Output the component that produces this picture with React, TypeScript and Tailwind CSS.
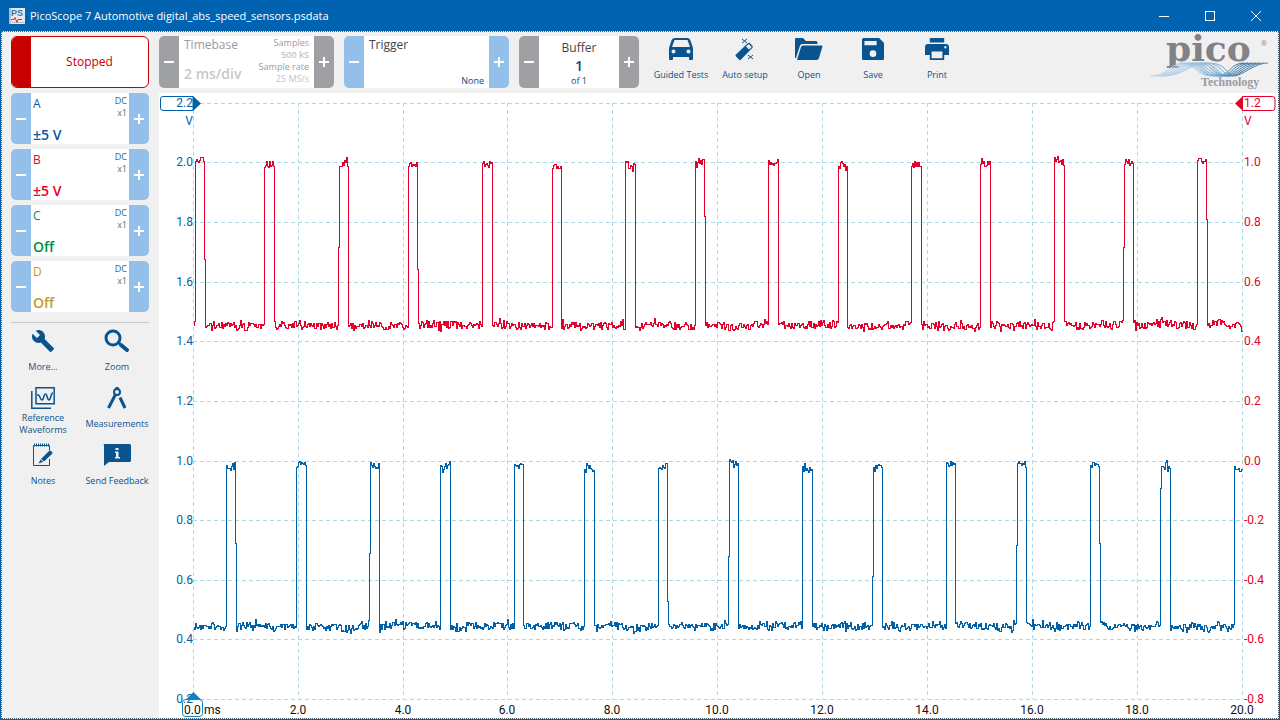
import type { ReactNode } from 'react';

interface Pulse {
  rise: number;
  fall: number;
  top: number;
  riseStep?: number;
  fallStep?: number;
}

const CHANNEL_B: Pulse[] = [
  { rise: 195, fall: 204, top: 159, fallStep: 259 },
  { rise: 264, fall: 274, top: 163 },
  { rise: 339, fall: 348, top: 164, riseStep: 247 },
  { rise: 408, fall: 417, top: 163, fallStep: 269 },
  { rise: 482, fall: 492, top: 163 },
  { rise: 552, fall: 561, top: 165 },
  { rise: 625, fall: 635, top: 163 },
  { rise: 695, fall: 704, top: 163, fallStep: 216 },
  { rise: 768, fall: 778, top: 162 },
  { rise: 838, fall: 847, top: 166 },
  { rise: 911, fall: 921, top: 165 },
  { rise: 980, fall: 990, top: 164 },
  { rise: 1054, fall: 1064, top: 162 },
  { rise: 1124, fall: 1133, top: 163, riseStep: 247 },
  { rise: 1197, fall: 1206, top: 161, fallStep: 219 },
];

const CHANNEL_A: Pulse[] = [
  { rise: 226, fall: 235, top: 466, fallStep: 543 },
  { rise: 296, fall: 306, top: 463 },
  { rise: 370, fall: 379, top: 465, riseStep: 553 },
  { rise: 440, fall: 450, top: 467 },
  { rise: 514, fall: 523, top: 465 },
  { rise: 584, fall: 594, top: 466 },
  { rise: 658, fall: 667, top: 465, fallStep: 601 },
  { rise: 729, fall: 738, top: 464, riseStep: 556 },
  { rise: 802, fall: 812, top: 468 },
  { rise: 873, fall: 882, top: 467, riseStep: 576 },
  { rise: 946, fall: 955, top: 465 },
  { rise: 1017, fall: 1026, top: 465, riseStep: 545 },
  { rise: 1090, fall: 1099, top: 464, fallStep: 543 },
  { rise: 1161, fall: 1170, top: 465, riseStep: 488 },
  { rise: 1234, fall: 1250, top: 466 },
];

const H_LINES = [103, 162, 222, 282, 341, 401, 461, 520, 580, 639, 699];
const V_LINES = [193, 298, 403, 507, 612, 717, 822, 927, 1032, 1137, 1242];
const LEFT_LABELS = ['2.0', '1.8', '1.6', '1.4', '1.2', '1.0', '0.8', '0.6', '0.4', '0.2'];
const RIGHT_LABELS = ['1.0', '0.8', '0.6', '0.4', '0.2', '0.0', '-0.2', '-0.4', '-0.6', '-0.8'];
const TIME_LABELS = ['2.0', '4.0', '6.0', '8.0', '10.0', '12.0', '14.0', '16.0', '18.0', '20.0'];

// One noisy sample per column, drawn as steps
function buildTrace(pulses: Pulse[], base: number, seed: number): string {
  let state = seed;
  const rand = () => {
    state = (state * 1664525 + 1013904223) % 4294967296;
    return state / 4294967296;
  };
  let drift = 0;
  let d = '';
  for (let x = 193; x <= 1241; x++) {
    drift = drift * 0.85 + (rand() - 0.5) * 2;
    const spread = rand() > 0.85 ? 12 : 7;
    const noise = drift + (rand() - 0.5) * spread;
    const pulse = pulses.find((p) => x >= p.rise && x < p.fall);
    const step = pulses.find((p) => p.riseStep && x === p.rise - 1)?.riseStep
      ?? pulses.find((p) => p.fallStep && x === p.fall)?.fallStep;
    const y = step ?? Math.round((pulse ? pulse.top : base) + noise);
    d += d ? `V${y + 0.5}` : `M${x + 0.5} ${y + 0.5}`;
    d += `H${x + 1.5}`;
  }
  return d;
}

const TRACE_B = buildTrace(CHANNEL_B, 325, 42);
const TRACE_A = buildTrace(CHANNEL_A, 626, 7);

interface StepperProps {
  name: string;
  tone: 'blue' | 'gray';
  className: string;
  children: ReactNode;
}

function Stepper({ name, tone, className, children }: StepperProps) {
  const side = tone === 'blue' ? 'bg-[#94bfea]' : 'bg-[#9fa0a4]';
  return (
    <div className={`flex overflow-hidden rounded-[5px] bg-white ${className}`}>
      <button aria-label={`Decrease ${name}`} className={`flex w-5 shrink-0 items-center justify-center ${side}`}>
        <span className="h-[2px] w-[10px] bg-white" />
      </button>
      <div className="min-w-0 flex-1">{children}</div>
      <button aria-label={`Increase ${name}`} className={`flex w-5 shrink-0 items-center justify-center ${side}`}>
        <svg width="10" height="10" viewBox="0 0 10 10" fill="#fff">
          <path d="M4 0h2v4h4v2H6v4H4V6H0V4h4z" />
        </svg>
      </button>
    </div>
  );
}

interface ChannelProps {
  name: string;
  range: string;
  color: string;
}

function Channel({ name, range, color }: ChannelProps) {
  return (
    <Stepper name={`channel ${name}`} tone="blue" className="mx-[5px] h-[51px]">
      <div className="flex h-full justify-between">
        <div className={`flex flex-col justify-between pt-[3px] pl-[2px] ${color}`}>
          <span className="text-[12px] leading-4">{name}</span>
          <span className="text-[14px] leading-[18px] font-semibold whitespace-nowrap">{range}</span>
        </div>
        <div className="flex flex-col pt-[2px] pr-[2px] text-right text-[9px] leading-3 text-[#2d5f92]">
          <span>DC</span>
          <span className="text-[#5d6f85]">x1</span>
        </div>
      </div>
    </Stepper>
  );
}

function ToolButton({ label, className, children }: { label: string; className: string; children: ReactNode }) {
  return (
    <button className={`flex flex-col items-center pt-px text-[#09548f] ${className}`}>
      <span className="flex h-6 items-center">{children}</span>
      <span className="flex h-[27px] items-center justify-center text-center text-[9px] leading-3">{label}</span>
    </button>
  );
}

const CarIcon = () => (
  <svg width="24" height="22" viewBox="0 0 24 22" fill="currentColor">
    <path
      fillRule="evenodd"
      d="M6 0h12c2 0 3 1 3.500 2.500L24 10v11q0 1-1 1h-2q-1 0-1-1v-2H4v2q0 1-1 1H1q-1 0-1-1V10L2.500 2.500C3 1 4 0 6 0zM5.500 2 3 9h18l-2.500-7zM4.500 11.500a2 2 0 1 0 0 4 2 2 0 0 0 0-4zm15 0a2 2 0 1 0 0 4 2 2 0 0 0 0-4z"
    />
  </svg>
);

const WandIcon = () => (
  <svg width="20" height="22" viewBox="0 0 20 22" fill="currentColor">
    <path fillRule="evenodd" d="M1 16.500 13 5l1.500-.3 3.300 3.500-.3 1.500L6 21.500q-1 1-2 0L1 18.500q-1-1 0-2zM13.500 6 11 8.500l3 3L16.800 9z" />
    <path d="M7 1l5 4M12 1 7 5M13 17l5 4M18 17l-5 4" stroke="currentColor" strokeWidth="1" />
  </svg>
);

const OpenIcon = () => (
  <svg width="28" height="22" viewBox="0 0 28 22" fill="currentColor">
    <path d="M0 1q0-1 1-1h7l3 3h10q1.500 0 1.500 1.500V6H7.500Q5.500 6 5 7.500L1 20H0z" />
    <path d="M8 7.500h18.500q1.300 0 .9 1.300L24 20q-.5 2-2.500 2H2L6 9q.5-1.500 2-1.500z" />
  </svg>
);

const SaveIcon = () => (
  <svg width="22" height="22" viewBox="3 3 18 18" fill="currentColor">
    <path d="M17 3H4.500C3.500 3 3 3.500 3 4.500v15c0 1 .5 1.500 1.500 1.500h15c1 0 1.500-.5 1.500-1.500V7l-4-4zm-5 15.500a2.700 2.700 0 1 1 0-5.400 2.700 2.700 0 0 1 0 5.400zM15 9H5V5.500h10V9z" />
  </svg>
);

const PrintIcon = () => (
  <svg width="24" height="22" viewBox="2 3 20 18" preserveAspectRatio="none" fill="currentColor">
    <path d="M19.500 8h-15C3 8 2 9 2 10.500V17h4v4h12v-4h4v-6.500C22 9 21 8 19.500 8zM16.500 19.500h-9V14h9v5.500zm2.500-8a1 1 0 1 1 0-2 1 1 0 0 1 0 2zM18 3H6v3.700h12V3z" />
  </svg>
);

const WrenchIcon = () => (
  <svg width="24" height="24" viewBox="0 0 24 24" fill="currentColor">
    <path d="m22.700 19-9.100-9.100c.9-2.300.4-5-1.500-6.900-2-2-5-2.400-7.400-1.300L9 6 6 9 1.600 4.700C.4 7.100.9 10.100 2.900 12.100c1.900 1.900 4.600 2.400 6.900 1.500l9.100 9.100c.4.400 1 .4 1.400 0l2.300-2.300c.5-.4.5-1.100.1-1.400z" />
  </svg>
);

const ZoomIcon = () => (
  <svg width="26" height="24" viewBox="0 0 26 24" fill="none" stroke="currentColor">
    <circle cx="9" cy="9" r="7" strokeWidth="3" />
    <path d="m14 13 2 2" strokeWidth="3" />
    <path d="m17 16 6 5" strokeWidth="4" strokeLinecap="round" />
  </svg>
);

const WaveformIcon = () => (
  <svg width="24" height="22" viewBox="0 0 24 22" fill="none" stroke="currentColor">
    <path d="M.8 4v17.200H20" strokeWidth="1.500" />
    <path d="M5 .8h18.200v16H5z" strokeWidth="1.500" />
    <path d="M6 8h1.500c1.500 0 1.500 5 3.500 5s1.500-6 3.500-6 1.500 6 3.500 6 1.500-7 4-7" strokeWidth="1.500" />
  </svg>
);

const CompassIcon = () => (
  <svg width="20" height="24" viewBox="0 0 20 24" fill="none" stroke="currentColor">
    <path d="M10 1v3" strokeWidth="3" />
    <circle cx="10" cy="6" r="3" strokeWidth="2" />
    <path d="m8.500 8.500-7 13.500M13 11.500 18 22" strokeWidth="3" />
  </svg>
);

const NotesIcon = () => (
  <svg width="22" height="24" viewBox="0 0 22 24" fill="none" stroke="currentColor">
    <path d="M1.500 2.500h16v5M17.500 16v6.500h-16v-20" strokeWidth="1" />
    <path d="M2 2h16" strokeWidth="3" strokeDasharray="1 1" />
    <path d="m9 16 8-8q1-1 2 0l1 1q1 1 0 2l-8 7.500-5.500 2z" fill="currentColor" stroke="none" />
    <path d="m8.500 16 3.500 3" stroke="#f0f0f0" strokeWidth="1" />
  </svg>
);

const FeedbackIcon = () => (
  <svg width="28" height="22" viewBox="0 0 28 22">
    <path d="M1.500 0h25q1.500 0 1.500 1.500v15q0 1.500-1.500 1.500H6l-5 4V2Q0 0 1.500 0z" fill="currentColor" />
    <path d="M12.500 4h3v2h-3zM12 7.500h3.500V13H17v1.500h-5V13h1V9h-1z" fill="#f0f0f0" />
  </svg>
);

function PicoLogo() {
  const strands = [0, 1, 2, 3, 4, 5, 6];
  return (
    <svg width="120" height="52" viewBox="0 0 120 52" className="overflow-visible" role="img" aria-label="Pico Technology">
      <defs>
        <linearGradient id="strand" gradientUnits="userSpaceOnUse" x1="0" y1="0" x2="120" y2="0">
          <stop offset="0" stopColor="#c3dcf0" />
          <stop offset="0.5" stopColor="#8fb9dc" />
          <stop offset="0.75" stopColor="#35729c" />
          <stop offset="1" stopColor="#5a93ba" />
        </linearGradient>
      </defs>
      <text x="16" y="25" fontFamily="DejaVu Serif, serif" fontSize="36" fontWeight="bold" fill="#808287">
        pico
      </text>
      <text x="111" y="10" fontFamily="Liberation Sans, sans-serif" fontSize="8" fill="#808287">®</text>
      <g fill="none" stroke="url(#strand)" strokeWidth="1">
        {strands.map((i) => (
          <path
            key={i}
            d={`M${i * 2} 40C${18 + i * 3} 40 ${20 + i * 3} 27 ${34 + i * 4} 27S${52 + i * 4} 40 ${66 + i * 3} 40S${80 + i * 4} 27 ${94 + i * 4} 27`}
          />
        ))}
        {strands.map((i) => (
          <path key={`b${i}`} d={`M${30 + i * 4} 27C${46 + i * 3} 27 ${46 + i * 3} 40 ${62 + i * 3} 40`} />
        ))}
      </g>
      <text x="51" y="50" fontFamily="Liberation Serif, serif" fontSize="12" fontWeight="bold" fill="#999ba0">
        Technology
      </text>
    </svg>
  );
}

function Scope() {
  return (
    <svg
      viewBox="159 93 1119 625"
      className="block w-full bg-white"
      fontFamily="Roboto, sans-serif"
      fontSize="12"
      role="img"
      aria-label="Channel A and channel B against time"
    >
      <g stroke="#add8e6" strokeDasharray="4 3" shapeRendering="crispEdges">
        {H_LINES.map((y) => (
          <line key={y} x1="193" x2="1242" y1={y + 0.5} y2={y + 0.5} />
        ))}
        {V_LINES.map((x) => (
          <line key={x} x1={x + 0.5} x2={x + 0.5} y1="103" y2="699" />
        ))}
      </g>

      <path d={TRACE_B} fill="none" stroke="#e4002b" shapeRendering="crispEdges" />
      <path d={TRACE_A} fill="none" stroke="#0060a8" shapeRendering="crispEdges" />

      {/* Voltage axes */}
      <g fill="#0060a8" textAnchor="end">
        <path d="M163 96.500h30v14h-30q-2.500 0-2.500-2.500v-9q0-2.500 2.500-2.500z" fill="#fff" stroke="#0060a8" />
        <path d="M193 96v15l8-7.500z" />
        <text x="193" y="107">2.2</text>
        <text x="193" y="125">V</text>
        {LEFT_LABELS.map((label, i) => (
          <text key={label} x="193" y={H_LINES[i + 1] + 4}>{label}</text>
        ))}
      </g>
      <g fill="#e4002b">
        <path d="M1242.500 96.500h30q2.500 0 2.500 2.500v9q0 2.500-2.500 2.500h-30z" fill="#fff" stroke="#e4002b" />
        <path d="M1243 96v15l-8-7.500z" />
        <text x="1244" y="107">1.2</text>
        <text x="1244" y="125">V</text>
        {RIGHT_LABELS.map((label, i) => (
          <text key={label} x="1244" y={H_LINES[i + 1] + 4}>{label}</text>
        ))}
      </g>

      {/* Time axis */}
      <rect x="182.500" y="699.500" width="20" height="17" rx="3" fill="none" stroke="#0a85ca" />
      <path d="M193.500 692l8 8h-16z" fill="#0a85ca" />
      <g fill="#111">
        <text x="184" y="714">0.0</text>
        <text x="204" y="714">ms</text>
        {TIME_LABELS.map((label, i) => (
          <text key={label} x={V_LINES[i + 1]} y="714" textAnchor="middle">{label}</text>
        ))}
      </g>
    </svg>
  );
}

export default function App() {
  return (
    <div className="flex min-h-screen flex-col border border-[#0063b1] bg-[#f0f0f0] font-['Open_Sans','Noto_Sans',sans-serif]">
      {/* Title bar */}
      <header className="flex h-[30px] items-center bg-[#0063b1] pl-2 text-white">
        <svg width="16" height="16" viewBox="0 0 16 16">
          <path d="M0 0h16v16H0z" fill="#e8e8ea" />
          <path d="M0 0h2v16H0zM3 14h13v1H3z" fill="#b9bcc2" />
          <text x="2" y="8" fontFamily="Liberation Sans, sans-serif" fontSize="9" fontWeight="bold" fill="#2b7bbf">PS</text>
          <path d="M2 11.500h3l1-2 2 5 1-3h4" fill="none" stroke="#d8283c" />
        </svg>
        <h1 className="ml-[5px] text-[11px] leading-4 whitespace-nowrap">
          PicoScope 7 Automotive digital_abs_speed_sensors.psdata
        </h1>
        <div className="ml-auto flex">
          <button aria-label="Minimise" className="flex h-[30px] w-[46px] items-center justify-center">
            <span className="h-px w-[10px] bg-white" />
          </button>
          <button aria-label="Maximise" className="flex h-[30px] w-[46px] items-center justify-center">
            <span className="h-[10px] w-[10px] border border-white" />
          </button>
          <button aria-label="Close" className="flex h-[30px] w-[46px] items-center justify-center">
            <svg width="10" height="10" viewBox="0 0 10 10" stroke="#fff">
              <path d="m0 0 10 10M10 0 0 10" />
            </svg>
          </button>
        </div>
      </header>

      <div className="flex flex-1 border border-dotted border-[#4c5b68]">
        {/* Channels and tools */}
        <aside className="flex w-[157px] shrink-0 flex-col gap-[5px] pt-1 pr-[5px] pl-1">
          <button className="mx-[5px] flex h-[52px] overflow-hidden rounded-md border border-[#c80000] bg-white text-[#c80000]">
            <span className="h-full w-[19px] bg-[#c80000]" />
            <span className="flex h-full flex-1 items-center justify-center text-[12px]">Stopped</span>
          </button>
          <Channel name="A" range="±5 V" color="text-[#0a54a0]" />
          <Channel name="B" range="±5 V" color="text-[#e4002b]" />
          <Channel name="C" range="Off" color="text-[#009045]" />
          <Channel name="D" range="Off" color="text-[#c49a2e]" />

          <div className="mx-[5px] mt-[5px] border-t border-[#c8c8c8]" />
          <div className="grid grid-cols-2 gap-y-[5px]">
            <ToolButton label="More..." className="w-full"><WrenchIcon /></ToolButton>
            <ToolButton label="Zoom" className="w-full"><ZoomIcon /></ToolButton>
            <ToolButton label="Reference Waveforms" className="w-full px-2"><WaveformIcon /></ToolButton>
            <ToolButton label="Measurements" className="w-full"><CompassIcon /></ToolButton>
            <ToolButton label="Notes" className="w-full"><NotesIcon /></ToolButton>
            <ToolButton label="Send Feedback" className="w-full"><FeedbackIcon /></ToolButton>
          </div>
        </aside>

        <main className="flex min-w-0 flex-1 flex-col bg-white">
          <div className="flex items-start gap-[10px] bg-[#f0f0f0] pt-1 pb-[5px]">
            <Stepper name="timebase" tone="gray" className="h-[52px] w-[175px] shrink-0">
              <div className="flex h-full justify-between px-[5px] whitespace-nowrap">
                <div className="flex flex-col justify-between pb-1">
                  <span className="text-[12px] leading-[18px] text-[#9c9ca0]">Timebase</span>
                  <span className="text-[14px] leading-[20px] font-semibold text-[#c8c8c8]">2 ms/div</span>
                </div>
                <div className="flex flex-col pt-[1px] text-right text-[9px] leading-3 text-[#9c9ca0]">
                  <span>Samples</span>
                  <span className="font-semibold text-[#c4c4c4]">500 kS</span>
                  <span>Sample rate</span>
                  <span className="text-[#c4c4c4]">25 MS/s</span>
                </div>
              </div>
            </Stepper>
            <Stepper name="trigger" tone="blue" className="h-[52px] w-[165px] shrink-0">
              <div className="flex h-full flex-col justify-between px-[5px] pb-px">
                <span className="text-[12px] leading-[18px] text-[#444]">Trigger</span>
                <span className="text-right text-[9px] leading-3 text-[#0a4a86]">None</span>
              </div>
            </Stepper>
            <Stepper name="buffer" tone="gray" className="h-[52px] w-[120px] shrink-0">
              <div className="flex h-full flex-col items-center pt-[3px] text-[#0a4a86]">
                <span className="text-[12px] leading-[18px] text-[#444]">Buffer</span>
                <span className="text-[14px] leading-[18px] font-semibold">1</span>
                <span className="text-[9px] leading-3">of 1</span>
              </div>
            </Stepper>
            <nav className="flex">
              <ToolButton label="Guided Tests" className="w-16"><CarIcon /></ToolButton>
              <ToolButton label="Auto setup" className="w-16"><WandIcon /></ToolButton>
              <ToolButton label="Open" className="w-16"><OpenIcon /></ToolButton>
              <ToolButton label="Save" className="w-16"><SaveIcon /></ToolButton>
              <ToolButton label="Print" className="w-16"><PrintIcon /></ToolButton>
            </nav>
            <div className="mr-2 ml-auto h-[52px] shrink-0">
              <PicoLogo />
            </div>
          </div>
          <Scope />
        </main>
      </div>
    </div>
  );
}
